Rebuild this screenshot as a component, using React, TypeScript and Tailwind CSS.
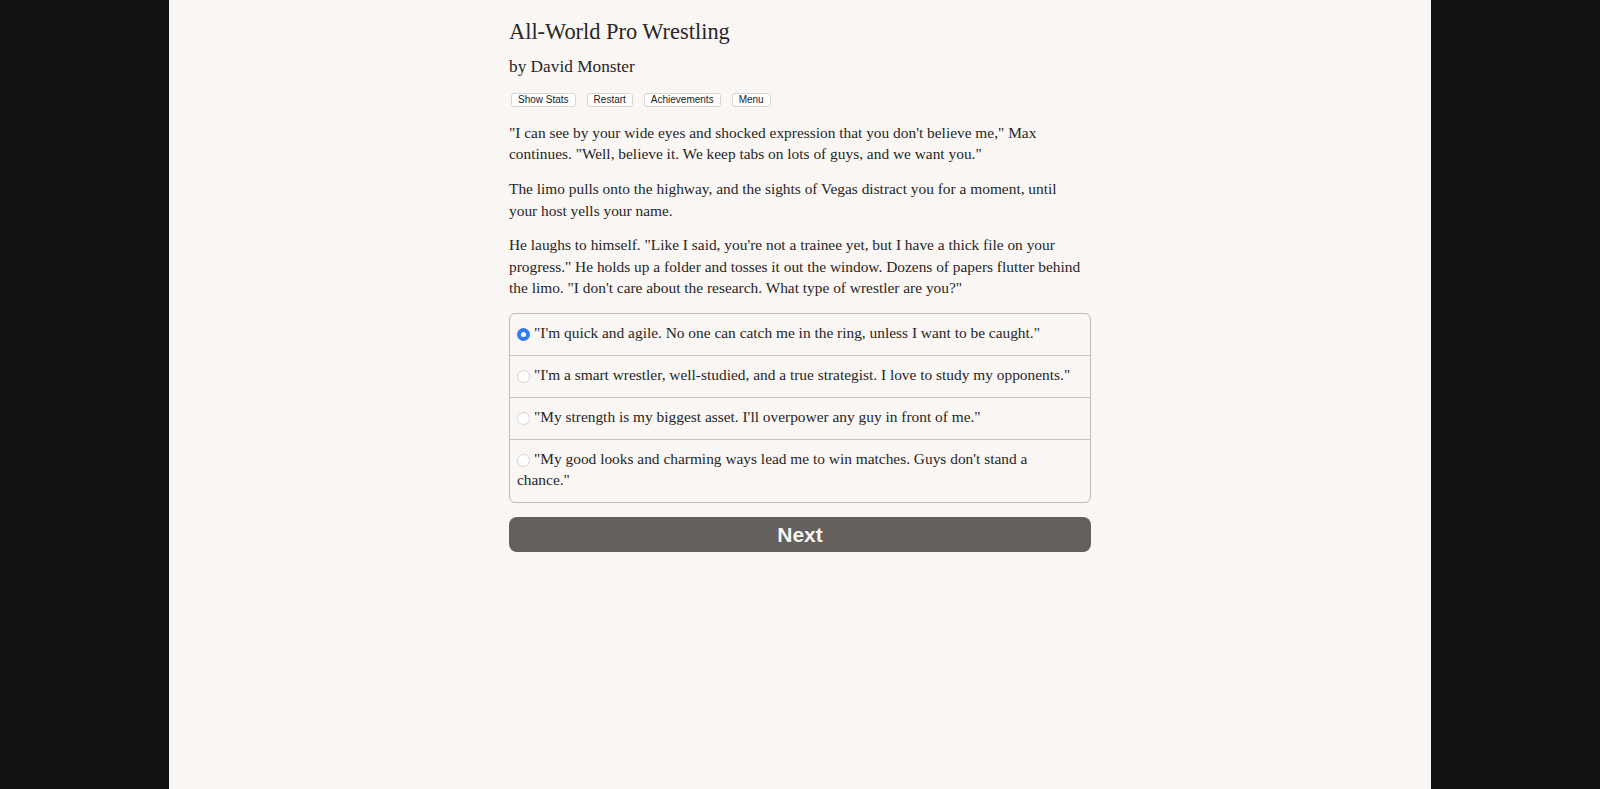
import { useState } from "react";
import clsx from "clsx";

const serif = "font-['Liberation_Serif','Times_New_Roman',serif]";
const sans = "font-['Liberation_Sans',Arial,sans-serif]";

const passage = [
  `"I can see by your wide eyes and shocked expression that you don't believe me," Max continues. "Well, believe it. We keep tabs on lots of guys, and we want you."`,
  `The limo pulls onto the highway, and the sights of Vegas distract you for a moment, until your host yells your name.`,
  `He laughs to himself. "Like I said, you're not a trainee yet, but I have a thick file on your progress." He holds up a folder and tosses it out the window. Dozens of papers flutter behind the limo. "I don't care about the research. What type of wrestler are you?"`,
];

const options = [
  `"I'm quick and agile. No one can catch me in the ring, unless I want to be caught."`,
  `"I'm a smart wrestler, well-studied, and a true strategist. I love to study my opponents."`,
  `"My strength is my biggest asset. I'll overpower any guy in front of me."`,
  `"My good looks and charming ways lead me to win matches. Guys don't stand a chance."`,
];

const toolbar = ["Show Stats", "Restart", "Achievements", "Menu"];

// same box for both states so the baseline doesn't shift
const Radio = ({ checked }: { checked: boolean }) => (
  <span
    className={clsx(
      "mr-[4px] inline-flex h-[13px] w-[13px] items-center justify-center rounded-full align-[1px]",
      checked ? "bg-[#2f7cf6]" : "border border-[#d6d3d0] bg-white"
    )}
  >
    <span className={clsx("h-[5px] w-[5px] rounded-full", checked ? "bg-white" : "bg-transparent")} />
  </span>
);

const App = () => {
  const [choice, setChoice] = useState(0);

  return (
    <div className="min-h-screen bg-[#111111]">
      <div className="mx-auto min-h-screen w-[1262px] bg-[#faf6f3]">
        <div className={`mx-auto w-[582px] pt-[18px] text-[#262626] ${serif}`}>
          <h1 className="text-[22.4px] leading-[27px]">All-World Pro Wrestling</h1>
          <h2 className="mt-[11px] text-[17.3px] leading-[21px]">by David Monster</h2>

          <div className="mt-[16px] ml-[2px] flex gap-[11px]">
            {toolbar.map((label) => (
              <button
                key={label}
                className={`h-[14px] rounded-[3px] border border-[#d9d6d3] bg-white px-[6px] text-[10px] leading-[12px] text-[#222] ${sans}`}
              >
                {label}
              </button>
            ))}
          </div>

          {/* story text, kept a little narrower than the column so it wraps like the game */}
          <div className="mt-[15px] w-[576px] text-[15.4px] leading-[21.4px]">
            {passage.map((text, i) => (
              <p key={i} className="mb-[13.4px]">
                {text}
              </p>
            ))}
          </div>

          <div className="mt-[14px] overflow-hidden rounded-[6px] border border-[#bdb8b3] text-[15.4px] leading-[21px]">
            {options.map((text, i) => (
              <label
                key={i}
                onClick={() => setChoice(i)}
                className="block cursor-pointer border-t border-[#c9c4bf] pt-[8px] pb-[12px] pr-[12px] pl-[7px] first:border-t-0"
              >
                <Radio checked={choice === i} />
                {text}
              </label>
            ))}
          </div>

          <button
            className={`mt-[14px] h-[35px] w-full rounded-[8px] bg-[#64605d] text-[21px] font-bold leading-[35px] text-[#f7f4f2] ${sans}`}
          >
            Next
          </button>
        </div>
      </div>
    </div>
  );
};

export default App;
